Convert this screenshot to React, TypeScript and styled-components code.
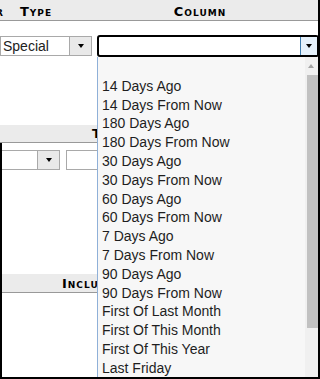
import styled, { createGlobalStyle } from "styled-components";

const GlobalStyle = createGlobalStyle`
  html, body {
    margin: 0;
    padding: 0;
    background: #fff;
  }

  body {
    font-family: "Liberation Sans", Arial, sans-serif;
  }
`;

const Viewport = styled.div`
  display: flex;
  flex-direction: column;

  width: 320px;
  height: 379px;
  box-sizing: border-box;
  overflow: hidden;

  background: #fff;
  border-right: 2px solid #000;
  border-bottom: 2px solid #000;
`;

const HeaderRow = styled.div<{ $height: number }>`
  display: flex;
  flex: 0 0 auto;

  height: ${({ $height }) => $height}px;
  background: #ebebeb;
  border-bottom: 1px solid #999;
`;

const HeaderCell = styled.div<{
  $width?: number;
  $justify?: "flex-start" | "center" | "flex-end";
  $indent?: number;
}>`
  display: flex;
  align-items: flex-end;
  justify-content: ${({ $justify }) => $justify ?? "flex-start"};

  flex: 0 0 ${({ $width }) => ($width ? `${$width}px` : "auto")};
  min-width: 0;
  padding: 0 0 2px ${({ $indent }) => $indent ?? 0}px;

  font-family: "DejaVu Sans", Verdana, sans-serif;
  font-size: 13px;
  font-weight: bold;
  font-variant: small-caps;
  letter-spacing: 1px;
  line-height: 13px;
  color: #000;
  white-space: nowrap;
`;

const FieldRow = styled.div<{ $height: number; $top: number }>`
  display: flex;
  align-items: flex-start;

  flex: 0 0 auto;
  height: ${({ $height }) => $height}px;
  box-sizing: border-box;
  padding-top: ${({ $top }) => $top}px;
`;

const FieldLine = styled.div<{ $gap: number }>`
  display: flex;
  align-items: center;
  gap: ${({ $gap }) => $gap}px;
`;

const Select = styled.div<{ $width: number; $flushLeft?: boolean }>`
  display: flex;
  flex: 0 0 ${({ $width }) => $width}px;

  height: 20px;
  box-sizing: border-box;

  background: #fff;
  border: 1px solid #a9a9a9;
  border-left-width: ${({ $flushLeft }) => ($flushLeft ? 0 : 1)}px;

  font-size: 14px;
  color: #222;
`;

const SelectValue = styled.span`
  flex: 1;
  padding-left: 2px;
  line-height: 18px;
  white-space: nowrap;
  overflow: hidden;
`;

const SelectArrow = styled.span`
  display: flex;
  align-items: center;
  justify-content: center;

  flex: 0 0 22px;
  box-sizing: border-box;

  background: #e9e9e9;
  border-left: 1px solid #a9a9a9;
`;

const Caret = styled.span<{ $color?: string; $up?: boolean }>`
  width: 0;
  height: 0;
  border-left: 3.5px solid transparent;
  border-right: 3.5px solid transparent;
  ${({ $up, $color }) =>
    $up
      ? `border-bottom: 4px solid ${$color ?? "#000"};`
      : `border-top: 4px solid ${$color ?? "#000"};`}
`;

const OpenSelect = styled.div`
  position: relative;
  flex: 0 0 222px;
`;

const OpenBox = styled.div`
  display: flex;

  height: 22px;
  box-sizing: border-box;

  background: #fff;
  border: 2px solid #000;
  border-radius: 3px;
`;

const OpenButton = styled.span`
  display: flex;
  align-items: center;
  justify-content: center;

  flex: 0 0 17px;
  margin-left: auto;
  box-sizing: border-box;

  background: #e5f1fb;
  border-left: 1px solid #3d7bad;
`;

const ListBox = styled.div`
  position: absolute;
  top: 100%;
  left: 0;
  z-index: 2;

  display: flex;
  width: 222px;
  height: 330px;
  box-sizing: border-box;

  background: #f7f7f7;
  border-left: 1px solid #8fb0d8;
`;

const Options = styled.ul`
  flex: 1;
  margin: 0;
  padding: 1px 0 0 0;
  list-style: none;
`;

const Option = styled.li`
  height: 18.8px;
  padding-left: 4px;

  font-size: 14px;
  line-height: 18.8px;
  color: #1e1e1e;
  white-space: nowrap;
`;

const ScrollTrack = styled.div`
  display: flex;
  flex-direction: column;
  align-items: stretch;

  flex: 0 0 14px;
  background: #f0f0f0;
`;

const ScrollArrow = styled.div`
  display: flex;
  align-items: center;
  justify-content: center;

  height: 17px;
  padding-right: 2px;
`;

const ScrollThumb = styled.div`
  height: 253px;
  margin: 1px 0 0 2px;
  background: #c1c1c1;
`;

const Panel = styled.div`
  display: flex;
  flex-direction: column;
  flex: 1;

  border-left: 2px solid #000;
  overflow: hidden;
`;

const options = [
  "",
  "14 Days Ago",
  "14 Days From Now",
  "180 Days Ago",
  "180 Days From Now",
  "30 Days Ago",
  "30 Days From Now",
  "60 Days Ago",
  "60 Days From Now",
  "7 Days Ago",
  "7 Days From Now",
  "90 Days Ago",
  "90 Days From Now",
  "First Of Last Month",
  "First Of This Month",
  "First Of This Year",
  "Last Friday",
];

export default function App() {
  return (
    <>
      <GlobalStyle />
      <Viewport>
        <HeaderRow $height={20}>
          <HeaderCell $width={4} $justify="flex-end">
            Order
          </HeaderCell>
          <HeaderCell $width={64} $justify="center">
            Type
          </HeaderCell>
          <HeaderCell $width={264} $justify="center">
            Column
          </HeaderCell>
        </HeaderRow>

        <FieldRow $height={104} $top={14}>
          <FieldLine $gap={5}>
            <Select $width={92}>
              <SelectValue>Special</SelectValue>
              <SelectArrow>
                <Caret />
              </SelectArrow>
            </Select>
            <OpenSelect>
              <OpenBox>
                <OpenButton>
                  <Caret />
                </OpenButton>
              </OpenBox>
              <ListBox>
                <Options>
                  {options.map((label, i) => (
                    <Option key={i}>{label}</Option>
                  ))}
                </Options>
                <ScrollTrack>
                  <ScrollArrow>
                    <Caret $up $color="#a3a3a3" />
                  </ScrollArrow>
                  <ScrollThumb />
                </ScrollTrack>
              </ListBox>
            </OpenSelect>
          </FieldLine>
        </FieldRow>

        <HeaderRow $height={17}>
          <HeaderCell $indent={92}>Type</HeaderCell>
        </HeaderRow>

        <Panel>
          <FieldRow $height={131} $top={7}>
            <FieldLine $gap={6}>
              <Select $width={58} $flushLeft>
                <SelectValue />
                <SelectArrow>
                  <Caret />
                </SelectArrow>
              </Select>
              <Select $width={120}>
                <SelectValue />
              </Select>
            </FieldLine>
          </FieldRow>

          <HeaderRow $height={18}>
            <HeaderCell $indent={60}>Include</HeaderCell>
          </HeaderRow>
        </Panel>
      </Viewport>
    </>
  );
}
